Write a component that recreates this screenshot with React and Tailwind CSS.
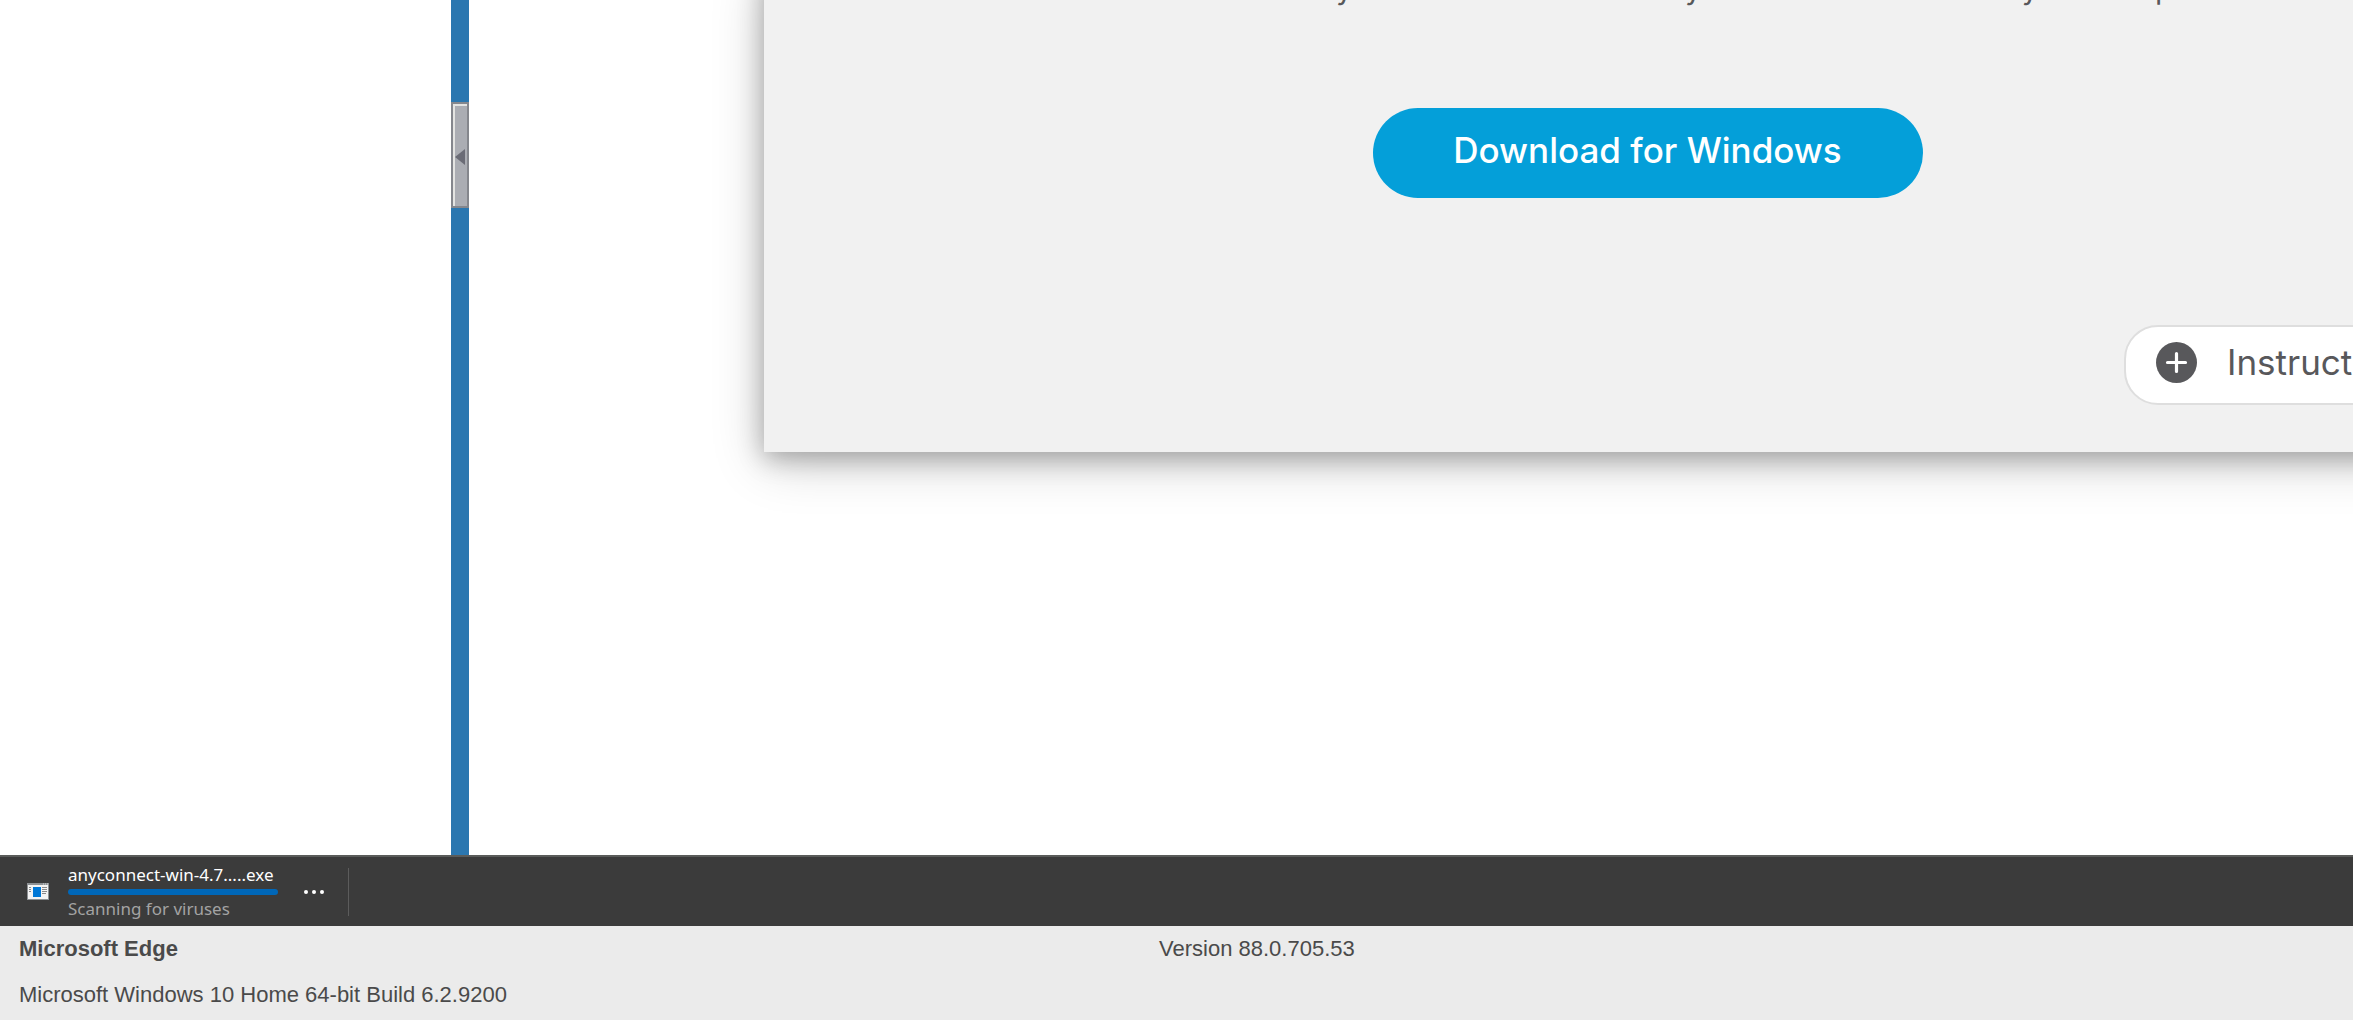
import React from 'react';

const systemInfo = {
  browser: 'Microsoft Edge',
  version: 'Version 88.0.705.53',
  os: 'Microsoft Windows 10 Home 64-bit Build 6.2.9200',
};

const PlusCircle = () => (
  <svg className="w-[41px] h-[41px] shrink-0" viewBox="0 0 41 41" aria-hidden="true">
    <circle cx="20.5" cy="20.5" r="20.5" fill="#58585b" />
    <path d="M20.5 11.5v18M11.5 20.5h18" stroke="#fff" strokeWidth="3.2" strokeLinecap="round" />
  </svg>
);

const InstallerIcon = () => (
  <svg className="w-[22px] h-[17px] shrink-0" viewBox="0 0 22 17" aria-hidden="true">
    <rect width="22" height="17" fill="#8d9194" />
    <rect x="1" y="2" width="20" height="14" fill="#f4f4f4" />
    <path d="M16 1h1M18 1h1M20 1h1" stroke="#d8d8d8" />
    <path d="M2 4.5h2M2 6.5h2M2 8.5h2" stroke="#8a8a8a" />
    <rect x="6" y="4" width="8" height="10" fill="#0078d7" />
    <path d="M15 4.5h5M15 6.5h5M15 8.5h5M15 10.5h4" stroke="#8a8a8a" />
  </svg>
);

const Splitter = () => (
  <div className="w-[18px] shrink-0 bg-[#2b77b0]">
    <button
      type="button"
      aria-label="Collapse sidebar"
      className="mt-[102px] flex h-[106px] w-full items-center justify-center border-2 border-[#85878d] bg-[#abadb3] pt-1 shadow-[inset_2px_2px_0_#e4e4e2]"
    >
      <svg className="h-4 w-[10px]" viewBox="0 0 10 16" aria-hidden="true">
        <path d="M10 0v16L0 8z" fill="#6b6c76" />
      </svg>
    </button>
  </div>
);

const DownloadCard = () => (
  <section className="-mr-[178px] ml-[295px] bg-[#f1f1f1] pb-[47px] font-['Inter',sans-serif] shadow-[0_10px_50px_rgba(0,0,0,0.2),0_6px_24px_rgba(0,0,0,0.28)]">
    <p className="-mt-8 text-center text-[30px] leading-10 whitespace-nowrap text-[#58585b]">
      Download Cisco AnyConnect Secure Mobility Client and install it on your computer.
    </p>
    <div className="mt-[100px] flex justify-center">
      <button
        type="button"
        className="h-[90px] w-[550px] rounded-full bg-[#049fd9] pb-1.5 text-[35px] font-medium text-white"
      >
        Download for Windows
      </button>
    </div>
    <div className="mt-[127px] flex justify-end">
      <button
        type="button"
        className="mr-[10px] flex h-20 w-[397px] items-center gap-[30px] rounded-[34px] border-2 border-[#dedede] bg-white pb-1.5 pl-[30px] text-[35px] text-[#58585b]"
      >
        <PlusCircle />
        Instructions
      </button>
    </div>
  </section>
);

const DownloadBar = () => (
  <div className="flex h-[71px] shrink-0 items-center border-t-2 border-[#5a5c5a] bg-[#3b3b3b] pl-[27px] font-['Noto_Sans',sans-serif]">
    <InstallerIcon />
    <div className="ml-[19px] flex w-[210px] flex-col gap-0.5">
      <p className="text-[17px] leading-6 whitespace-nowrap text-white">anyconnect-win-4.7.....exe</p>
      <div className="h-[6px] rounded-full bg-[#0067b8]" />
      <p className="text-[17px] leading-6 whitespace-nowrap text-[#a3a3a3]">Scanning for viruses</p>
    </div>
    <button type="button" aria-label="More options" className="ml-[26px] flex gap-1">
      <span className="h-1 w-1 rounded-full bg-white" />
      <span className="h-1 w-1 rounded-full bg-white" />
      <span className="h-1 w-1 rounded-full bg-white" />
    </button>
    <div className="ml-6 h-12 w-px bg-[#5c5c5c]" />
  </div>
);

const App = () => {
  return (
    <div className="flex h-screen flex-col overflow-hidden bg-white">
      <main className="flex min-h-0 flex-1 overflow-hidden">
        <aside className="w-[451px] shrink-0" />
        <Splitter />
        <div className="min-w-0 flex-1">
          <DownloadCard />
        </div>
      </main>

      <DownloadBar />

      {/* System details */}
      <footer className="h-[94px] shrink-0 bg-[#ebebeb] px-[19px] pt-[7px] font-['Liberation_Sans',sans-serif] text-[22px] leading-8 text-[#4a4a4a]">
        <div className="flex">
          <p className="w-[1140px] font-bold">{systemInfo.browser}</p>
          <p>{systemInfo.version}</p>
        </div>
        <p className="mt-[14px]">{systemInfo.os}</p>
      </footer>
    </div>
  );
};

export default App;
